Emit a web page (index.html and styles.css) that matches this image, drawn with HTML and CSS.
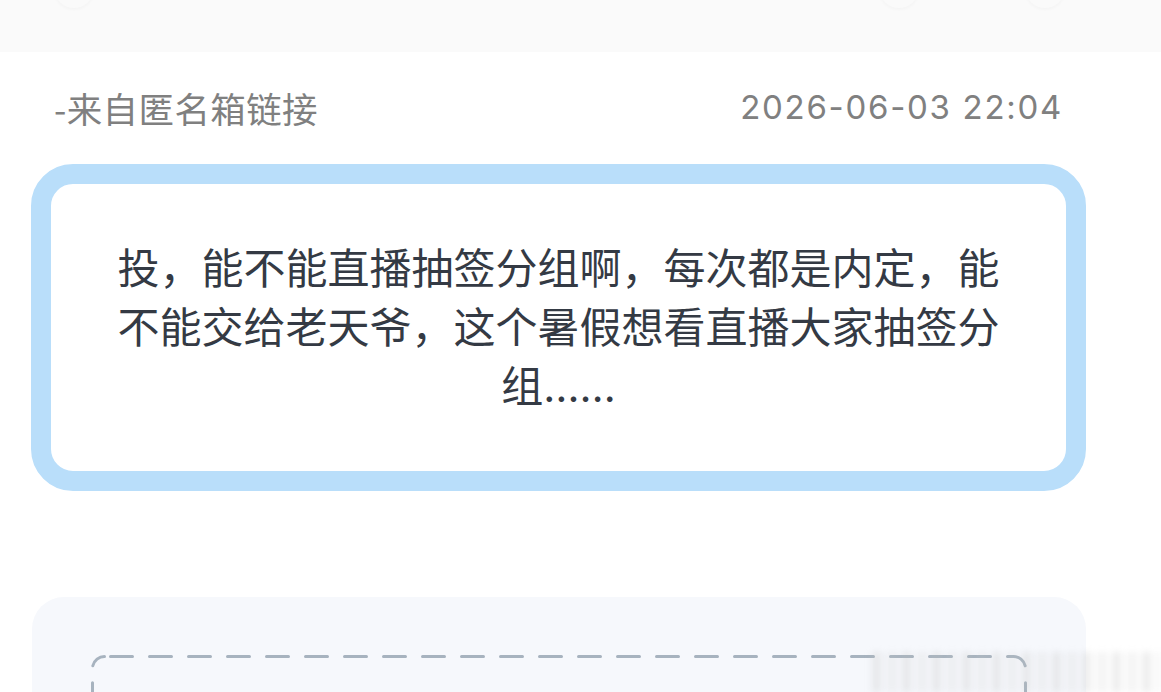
FILE: index.html
```html
<!DOCTYPE html>
<html lang="zh-CN">
<head>
<meta charset="utf-8">
<title>匿名箱</title>
<link rel="stylesheet" href="styles.css">
</head>
<body>
<header class="topbar">
  <span class="ghost ghost-left"></span>
  <span class="spacer"></span>
  <span class="ghost"></span>
  <span class="ghost ghost-right"></span>
</header>
<main class="page">
  <div class="meta">
    <span class="source">-来自匿名箱链接</span>
    <span class="date">2026-06-03 22:04</span>
  </div>
  <section class="question">
    <p class="question-text">投，能不能直播抽签分组啊，每次都是内定，能不能交给老天爷，这个暑假想看直播大家抽签分组……</p>
  </section>
  <section class="answer">
    <div class="dashed">
      <svg class="dash-frame" width="100%" height="100%" preserveAspectRatio="none">
        <rect x="1.5" y="1.5" width="933" height="200" rx="12" ry="12" fill="none" stroke="#a7b3bf" stroke-width="3" stroke-dasharray="22 17" stroke-dashoffset="-6" stroke-linecap="round"/>
      </svg>
    </div>
  </section>
  <div class="watermark"></div>
</main>
</body>
</html>
```
FILE: styles.css
```css
html, body {
  margin: 0;
  padding: 0;
  background: #ffffff;
  height: 692px;
  overflow: hidden;
}
body {
  font-family: "Noto Sans CJK SC", "Noto Sans", sans-serif;
}
.topbar {
  height: 52px;
  background: #fafafa;
  display: flex;
  align-items: flex-start;
  padding: 0 96px 0 54px;
  gap: 106px;
  overflow: hidden;
}
.spacer { flex: 1; }
.ghost {
  width: 40px;
  height: 40px;
  margin-top: -32px;
  border-radius: 50%;
  background: #fafafa;
  box-shadow: 0 2px 3px rgba(0,0,0,0.025);
}
.page {
  position: relative;
  display: flex;
  flex-direction: column;
}
.meta {
  display: flex;
  justify-content: space-between;
  align-items: center;
  padding: 0 98px 0 54px;
  height: 110px;
  margin-bottom: 2px;
  color: #808080;
}
.source {
  font-size: 35.5px;
  letter-spacing: 0.4px;
}
.date {
  font-family: "Inter", "Liberation Sans", sans-serif;
  font-size: 33px;
  letter-spacing: 1.7px;
  color: #808080;
}
.question {
  margin: 0 75px 0 31px;
  height: 327px;
  box-sizing: border-box;
  border: 20px solid #b9defa;
  border-radius: 42px;
  background: #ffffff;
  display: flex;
  align-items: center;
  justify-content: center;
}
.question-text {
  margin: 0;
  width: 900px;
  text-align: center;
  font-family: "Inter", "Noto Sans CJK SC", sans-serif;
  font-size: 42px;
  line-height: 59px;
  color: #343a44;
}
.answer {
  margin: 106px 75px 0 32px;
  height: 95px;
  overflow: hidden;
  background: #f6f8fc;
  border-radius: 32px 32px 0 0;
  padding: 58px 0 0 59px;
  box-sizing: border-box;
}
.dashed {
  position: relative;
  width: 937px;
  height: 203px;
}
.dash-frame {
  position: absolute;
  inset: 0;
}
.watermark {
  position: absolute;
  left: 870px;
  top: 600px;
  width: 291px;
  height: 40px;
  background: repeating-linear-gradient(90deg, rgba(180,180,180,0.0) 0px, rgba(190,190,190,0.35) 6px, rgba(255,255,255,0.0) 14px, rgba(200,200,200,0.25) 22px, rgba(255,255,255,0) 30px);
  filter: blur(3px);
}
```
